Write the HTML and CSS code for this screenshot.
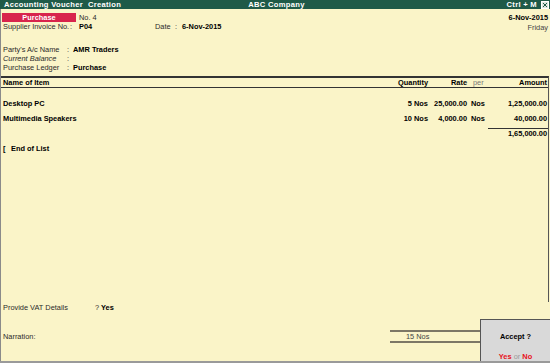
FILE: index.html
```html
<!DOCTYPE html>
<html lang="en">
<head>
    <meta charset="UTF-8">
    <title>Accounting Voucher Creation</title>
    <link rel="stylesheet" href="styles.css">
</head>
<body>
    <div class="screen">
        <div class="titlebar">
            <span class="t-left">Accounting Voucher&nbsp; Creation</span>
            <span class="t-mid">ABC Company</span>
            <span class="t-right">Ctrl + M
                <svg class="close" width="8" height="8" viewBox="0 0 8 8">
                    <rect x="0.5" y="0.5" width="7" height="7" fill="#dde6df" stroke="#ffffff"/>
                    <path d="M2 2 L6 6 M6 2 L2 6" stroke="#1f5a48" stroke-width="1"/>
                </svg>
            </span>
        </div>

        <div class="main">
            <div class="head">
                <div class="r1">
                    <span class="badge">Purchase</span>
                    <span class="vno">No. 4</span>
                    <span class="spacer"></span>
                    <b>6-Nov-2015</b>
                </div>
                <div class="r2">
                    <span class="lbl-inv">Supplier Invoice No.</span><span class="col-inv">:</span><b class="inv-val">P04</b>
                    <span class="lbl-date">Date</span><span class="col-date">:</span><b>6-Nov-2015</b>
                    <span class="spacer"></span>
                    <span class="day">Friday</span>
                </div>
                <div class="party">
                    <div class="pline"><span class="plbl">Party's A/c Name</span><span class="pcol">:</span><b>AMR Traders</b></div>
                    <div class="pline"><span class="plbl"><i>Current Balance</i></span><span class="pcol">:</span></div>
                    <div class="pline"><span class="plbl">Purchase Ledger</span><span class="pcol">:</span><b>Purchase</b></div>
                </div>
            </div>

            <div class="items">
                <div class="grid ihead">
                    <b>Name of Item</b>
                    <b class="num">Quantity</b>
                    <b class="num rate">Rate</b>
                    <span class="per">per</span>
                    <b class="num amt">Amount</b>
                </div>
                <div class="grid irow first">
                    <b>Desktop PC</b>
                    <b class="num">5 Nos</b>
                    <b class="num rate">25,000.00</b>
                    <b class="unit">Nos</b>
                    <b class="num amt">1,25,000.00</b>
                </div>
                <div class="grid irow">
                    <b>Multimedia Speakers</b>
                    <b class="num">10 Nos</b>
                    <b class="num rate">4,000.00</b>
                    <b class="unit">Nos</b>
                    <b class="num amt">40,000.00</b>
                </div>
                <div class="grid itotal">
                    <span></span><span></span><span></span><span></span>
                    <b class="num amt total">1,65,000.00</b>
                </div>
                <div class="eol"><b class="brk">[</b><b>End of List</b></div>
            </div>

            <div class="foot">
                <div class="vat"><span class="vlbl">Provide VAT Details</span><span class="q">?</span><b>Yes</b></div>
                <div class="narr">
                    <span class="nlbl">Narration:</span>
                    <span class="nos">15 Nos</span>
                </div>
            </div>
        </div>

        <div class="accept">
            <b class="acc-q">Accept ?</b>
            <div class="yn"><b class="red">Yes</b> <span class="or">or</span> <b class="red">No</b></div>
        </div>
    </div>
</body>
</html>
```

FILE: styles.css
```css
body {
    margin: 0;
    font-family: "Liberation Sans", Arial, sans-serif;
    font-size: 7.4px;
    color: #2a2a2a;
}
b {
    color: #000;
}
.screen {
    position: relative;
    width: 550px;
    height: 363px;
    display: flex;
    flex-direction: column;
    background-color: #faf4c8;
    box-sizing: border-box;
    border-bottom: 2px solid #9a9a9a;
    overflow: hidden;
}
.titlebar {
    height: 9px;
    line-height: 9px;
    background-color: #1f5a48;
    color: white;
    font-weight: bold;
    font-size: 7.6px;
    letter-spacing: 0.3px;
    display: grid;
    grid-template-columns: 1fr auto 1fr;
    padding: 0 1px 0 4px;
}
.t-right {
    text-align: right;
    display: flex;
    justify-content: flex-end;
    align-items: center;
    gap: 4px;
}
.close {
    display: block;
}
.main {
    flex: 1;
    display: flex;
    flex-direction: column;
    border-left: 1px solid #8a8a8a;
}
.head {
    padding: 4px 2px 4px 2px;
}
.r1, .r2 {
    display: flex;
    height: 9px;
    line-height: 9px;
}
.spacer {
    flex: 1;
}
.badge {
    width: 74px;
    margin-left: -1px;
    background-color: #d8244c;
    color: white;
    font-weight: bold;
    text-align: center;
}
.vno {
    margin-left: 3px;
}
.lbl-inv {
    width: 67px;
}
.col-inv {
    width: 9px;
}
.inv-val {
    width: 76px;
}
.lbl-date {
    width: 20px;
}
.col-date {
    width: 7px;
}
.day {
    color: #444;
    position: relative;
    top: 1px;
}
.party {
    margin-top: 14px;
}
.pline {
    height: 9px;
    line-height: 9px;
    display: flex;
}
.plbl {
    width: 64px;
}
.pcol {
    width: 6px;
}
.items {
    flex: 1;
    border-top: 2px solid #333;
    border-right: 1px solid #555;
    margin-right: 1px;
    padding-left: 2px;
}
.grid {
    display: grid;
    grid-template-columns: 1fr 48px 43px 17px 60px;
}
.num {
    text-align: right;
}
.rate {
    padding-right: 4px;
}
.amt {
    padding-right: 1px;
}
.ihead {
    height: 9px;
    line-height: 9px;
    border-bottom: 1px solid #333;
    margin-left: -2px;
    padding-left: 2px;
}
.per {
    color: #777;
    padding-left: 2px;
}
.irow {
    height: 15px;
    line-height: 15px;
}
.irow.first {
    margin-top: 8px;
}
.unit {
    padding-left: 0;
}
.itotal {
    margin-top: 2px;
    height: 10px;
    line-height: 9px;
}
.total {
    border-top: 1px solid #333;
}
.eol {
    margin-top: 6px;
    height: 10px;
    line-height: 10px;
    display: flex;
}
.brk {
    width: 8px;
}
.foot {
    height: 59px;
    padding-left: 2px;
}
.vat {
    height: 12px;
    line-height: 12px;
    display: flex;
}
.vlbl {
    width: 92px;
}
.q {
    width: 6px;
}
.narr {
    margin-top: 16px;
    display: flex;
    align-items: center;
}
.nlbl {
    width: 387px;
}
.nos {
    width: 74px;
    padding-left: 16px;
    height: 9px;
    line-height: 9px;
    border-top: 2px solid #7c7766;
    border-bottom: 2px solid #7c7766;
    color: #444;
}
.accept {
    position: absolute;
    right: 0;
    bottom: 0;
    width: 69px;
    height: 41px;
    background-color: #d9d9d9;
    border-left: 1px solid #555;
    border-top: 1px solid #555;
    text-align: center;
}
.acc-q {
    display: block;
    margin-top: 12px;
    line-height: 9px;
}
.yn {
    margin-top: 11px;
    line-height: 9px;
}
.red {
    color: #e8101a;
}
.or {
    color: #999;
}
```
